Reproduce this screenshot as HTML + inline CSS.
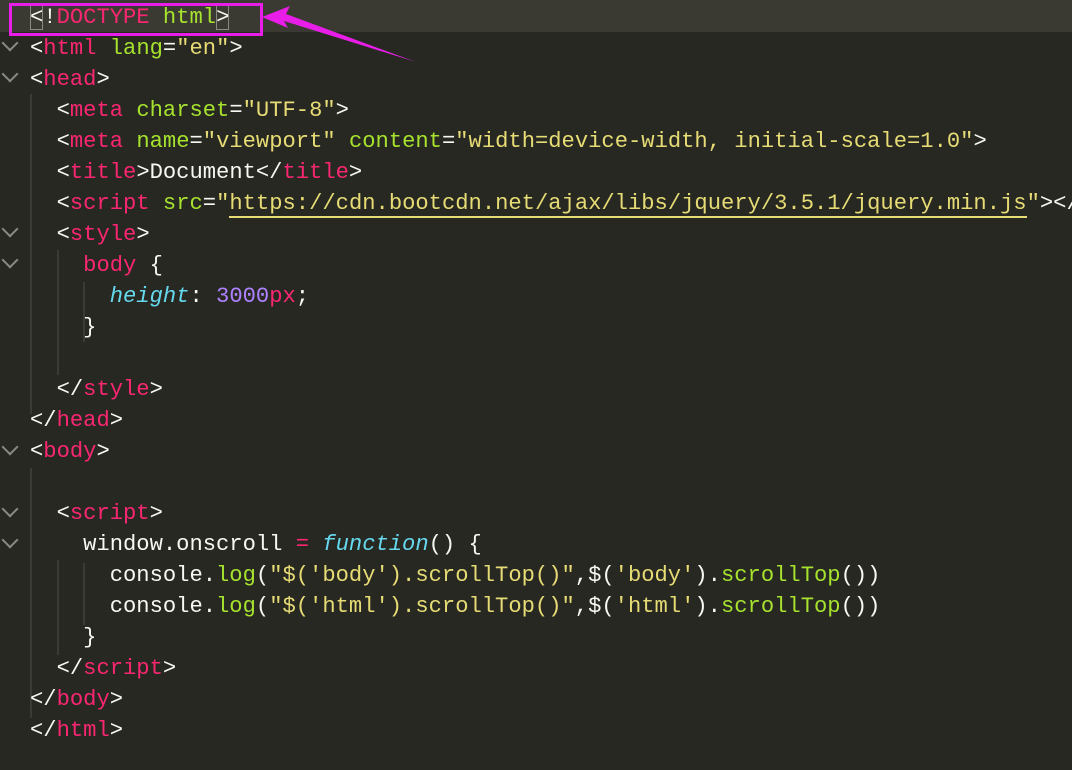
<!DOCTYPE html>
<html><head><style>
body{margin:0;width:1072px;height:770px;background:#272822;overflow:hidden;position:relative;font-family:"Liberation Mono",monospace;font-size:22.15px;color:#f8f8f2}
.l{position:absolute;left:30px;right:0;overflow:hidden;height:31px;line-height:31px;white-space:pre}
.t{color:#f92672}.a{color:#a6e22e}.s{color:#e6db74}.k{color:#66d9ef;font-style:italic}.n{color:#ae81ff}
.u{border-bottom:2px solid #e6db74}
.g{position:absolute;width:2px;background:#3b3b36}
.f{position:absolute;left:4px;width:10px;height:10px;border-right:2px solid #8a8a85;border-bottom:2px solid #8a8a85;transform:rotate(45deg)}
.b{outline:1.5px solid #8a8a85;outline-offset:-1px}
</style></head><body>
<div style="position:absolute;left:0;top:0;width:1072px;height:32px;background:#3b3a32"></div>
<div class="g" style="left:30px;top:94px;height:320px"></div>
<div class="g" style="left:57px;top:250px;height:125px"></div>
<div class="g" style="left:83px;top:282px;height:60px"></div>
<div class="g" style="left:30px;top:468px;height:250px"></div>
<div class="g" style="left:57px;top:560px;height:95px"></div>
<div class="g" style="left:83px;top:563px;height:62px"></div>
<div class="f" style="top:37px"></div><div class="f" style="top:68px"></div>
<div class="f" style="top:223px"></div><div class="f" style="top:254px"></div>
<div class="f" style="top:441px"></div><div class="f" style="top:503px"></div><div class="f" style="top:534px"></div>
<div class="l" style="top:2px"><span class="b">&lt;</span>!<span class="t">DOCTYPE</span> <span class="a">html</span><span class="b">&gt;</span></div>
<div class="l" style="top:33px">&lt;<span class="t">html</span> <span class="a">lang</span>=<span class="s">"en"</span>&gt;</div>
<div class="l" style="top:64px">&lt;<span class="t">head</span>&gt;</div>
<div class="l" style="top:95px">  &lt;<span class="t">meta</span> <span class="a">charset</span>=<span class="s">"UTF-8"</span>&gt;</div>
<div class="l" style="top:126px">  &lt;<span class="t">meta</span> <span class="a">name</span>=<span class="s">"viewport"</span> <span class="a">content</span>=<span class="s">"width=device-width, initial-scale=1.0"</span>&gt;</div>
<div class="l" style="top:157px">  &lt;<span class="t">title</span>&gt;Document&lt;/<span class="t">title</span>&gt;</div>
<div class="l" style="top:188px">  &lt;<span class="t">script</span> <span class="a">src</span>=<span class="s">"<span class="u">https://cdn.bootcdn.net/ajax/libs/jquery/3.5.1/jquery.min.js</span>"</span>&gt;&lt;/<span class="t">script</span>&gt;</div>
<div class="l" style="top:219px">  &lt;<span class="t">style</span>&gt;</div>
<div class="l" style="top:250px">    <span class="t">body</span> {</div>
<div class="l" style="top:281px">      <span class="k">height</span>: <span class="n">3000</span><span class="t">px</span>;</div>
<div class="l" style="top:312px">    }</div>
<div class="l" style="top:374px">  &lt;/<span class="t">style</span>&gt;</div>
<div class="l" style="top:405px">&lt;/<span class="t">head</span>&gt;</div>
<div class="l" style="top:436px">&lt;<span class="t">body</span>&gt;</div>
<div class="l" style="top:498px">  &lt;<span class="t">script</span>&gt;</div>
<div class="l" style="top:529px">    window.onscroll <span class="t">=</span> <span class="k">function</span>() {</div>
<div class="l" style="top:560px">      console.<span class="a">log</span>(<span class="s">"$('body').scrollTop()"</span>,$(<span class="s">'body'</span>).<span class="a">scrollTop</span>())</div>
<div class="l" style="top:591px">      console.<span class="a">log</span>(<span class="s">"$('html').scrollTop()"</span>,$(<span class="s">'html'</span>).<span class="a">scrollTop</span>())</div>
<div class="l" style="top:622px">    }</div>
<div class="l" style="top:653px">  &lt;/<span class="t">script</span>&gt;</div>
<div class="l" style="top:684px">&lt;/<span class="t">body</span>&gt;</div>
<div class="l" style="top:715px">&lt;/<span class="t">html</span>&gt;</div>
<div style="position:absolute;left:9px;top:3px;width:248px;height:27px;border:3px solid #e81ee8"></div>
<svg style="position:absolute;left:0;top:0" width="1072" height="770"><polygon points="262,17 290,6 286,14 416,62 284,21 288,28" fill="#e81ee8"/></svg>
</body></html>
